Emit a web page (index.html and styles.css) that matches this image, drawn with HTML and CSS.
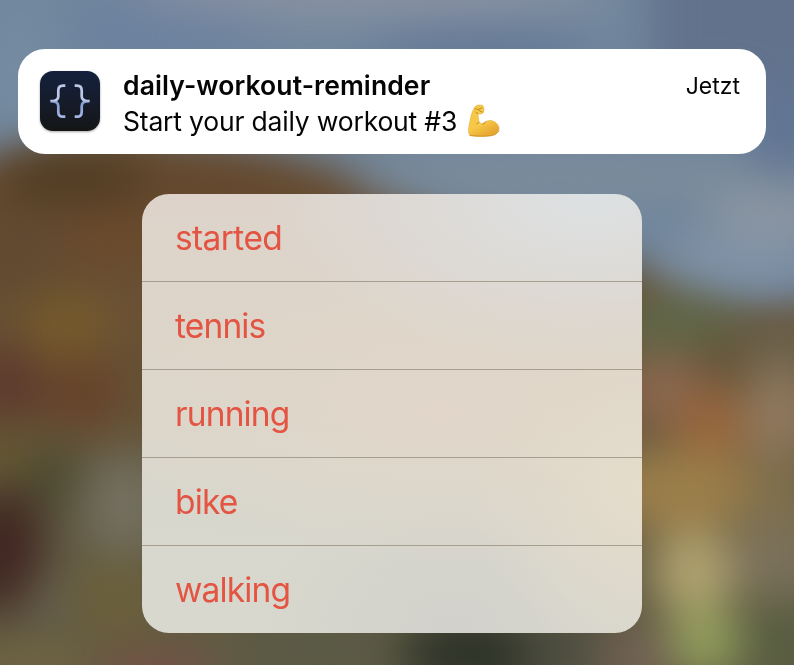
FILE: index.html
```html
<!DOCTYPE html>
<html lang="de">
<head>
<meta charset="utf-8">
<title>daily-workout-reminder</title>
<link rel="stylesheet" href="styles.css">
</head>
<body>
<svg class="wallpaper" viewBox="0 0 794 665" preserveAspectRatio="none" aria-hidden="true">
  <defs>
    <filter id="soft" x="-30%" y="-30%" width="160%" height="160%" color-interpolation-filters="sRGB"><feGaussianBlur stdDeviation="22"/></filter>
    <filter id="edge" x="-30%" y="-30%" width="160%" height="160%" color-interpolation-filters="sRGB"><feGaussianBlur stdDeviation="20"/></filter>
    <linearGradient id="ground" x2="0" y2="1"><stop offset=".3" stop-color="#664b2f"/><stop offset=".6" stop-color="#665337"/><stop offset=".75" stop-color="#625b43"/></linearGradient>
  </defs>
  <rect width="794" height="665" fill="url(#ground)"/>
  <path filter="url(#edge)" fill="#71879d" d="M-80-80H900V305L730 305L640 265L500 235L330 165L130 130L20 140L-80 200Z"/>
  <g filter="url(#soft)">
    <ellipse cx="20" cy="70" rx="35" ry="65" fill="#758ba1"/>
    <ellipse cx="160" cy="30" rx="100" ry="30" fill="#6b819e"/>
    <ellipse cx="370" cy="-8" rx="240" ry="24" fill="#8d92a3"/>
    <ellipse cx="480" cy="52" rx="110" ry="20" fill="#617694"/>
    <rect x="650" y="-60" width="220" height="150" fill="#62728c"/>
    <ellipse cx="785" cy="125" rx="45" ry="50" fill="#617492"/>
    <ellipse cx="560" cy="178" rx="210" ry="23" fill="#7d8c9b"/>
    <ellipse cx="770" cy="215" rx="65" ry="35" fill="#8994a0"/>
    <ellipse cx="735" cy="262" rx="80" ry="24" fill="#8192a8"/>
    <ellipse cx="75" cy="180" rx="75" ry="24" fill="#4e3b23"/>
    <ellipse cx="225" cy="185" rx="70" ry="16" fill="#64482f"/>
    <ellipse cx="110" cy="235" rx="45" ry="30" fill="#6b4a2c"/>
    <ellipse cx="15" cy="250" rx="40" ry="50" fill="#614a32"/>
    <ellipse cx="128" cy="310" rx="35" ry="35" fill="#6b5136"/>
    <ellipse cx="65" cy="325" rx="45" ry="32" fill="#765b2b"/>
    <ellipse cx="5" cy="385" rx="35" ry="40" fill="#5d392e"/>
    <ellipse cx="82" cy="393" rx="42" ry="36" fill="#67432a"/>
    <ellipse cx="5" cy="455" rx="25" ry="23" fill="#685a2c"/>
    <ellipse cx="50" cy="480" rx="30" ry="35" fill="#4d4a31"/>
    <ellipse cx="125" cy="505" rx="42" ry="50" fill="#747060"/>
    <ellipse cx="0" cy="550" rx="45" ry="62" fill="#412722"/>
    <ellipse cx="47" cy="600" rx="20" ry="32" fill="#65604f"/>
    <ellipse cx="115" cy="600" rx="42" ry="38" fill="#6c603a"/>
    <ellipse cx="30" cy="670" rx="60" ry="22" fill="#736741"/>
    <ellipse cx="155" cy="675" rx="60" ry="20" fill="#7b4f48"/>
    <ellipse cx="325" cy="650" rx="95" ry="50" fill="#5b5a45"/>
    <ellipse cx="475" cy="655" rx="75" ry="45" fill="#30352a"/>
    <ellipse cx="560" cy="650" rx="40" ry="35" fill="#4a4c40"/>
    <ellipse cx="670" cy="322" rx="70" ry="26" fill="#5e694a"/>
    <ellipse cx="785" cy="345" rx="50" ry="22" fill="#6b6450"/>
    <ellipse cx="662" cy="390" rx="48" ry="36" fill="#8a6850"/>
    <ellipse cx="780" cy="415" rx="42" ry="50" fill="#8f795e"/>
    <ellipse cx="710" cy="425" rx="35" ry="35" fill="#99653a"/>
    <ellipse cx="680" cy="490" rx="85" ry="42" fill="#9b7e4a"/>
    <ellipse cx="785" cy="500" rx="40" ry="30" fill="#80704b"/>
    <ellipse cx="780" cy="560" rx="50" ry="45" fill="#7b715b"/>
    <ellipse cx="693" cy="572" rx="42" ry="42" fill="#b0a370"/>
    <ellipse cx="775" cy="640" rx="50" ry="42" fill="#585d41"/>
    <ellipse cx="635" cy="660" rx="36" ry="28" fill="#746258"/>
    <ellipse cx="705" cy="642" rx="38" ry="35" fill="#929f5c"/>
  </g>
</svg>
<main class="screen">
  <section class="notification">
    <svg class="app-icon" viewBox="0 0 60 60" aria-hidden="true">
      <defs>
        <linearGradient id="tile" x2="0" y2="1"><stop stop-color="#14203d"/><stop offset=".55" stop-color="#151b29"/><stop offset="1" stop-color="#141516"/></linearGradient>
        <linearGradient id="brace" x1="0" y1="13" x2="0" y2="47" gradientUnits="userSpaceOnUse"><stop stop-color="#bcc8e4"/><stop offset=".48" stop-color="#bdc9ea"/><stop offset=".55" stop-color="#829bd0"/><stop offset="1" stop-color="#a9b9e4"/></linearGradient>
      </defs>
      <rect width="60" height="60" rx="13" fill="url(#tile)"/>
      <g fill="none" stroke="url(#brace)" stroke-width="2.7">
        <path d="M25.3 14.7H23q-4.7 0-4.7 4.7v6q0 4.8-8 4.8q8 0 8 4.8v6q0 4.7 4.7 4.7h2.3"/>
        <path d="M34.7 14.7H37q4.7 0 4.7 4.7v6q0 4.8 8 4.8q-8 0-8 4.8v6q0 4.7-4.7 4.7h-2.3"/>
      </g>
    </svg>
    <div class="content">
      <div class="heading"><h1 class="title">daily-workout-reminder</h1><time class="time">Jetzt</time></div>
      <p class="message"><span>Start your daily workout #3</span>
        <svg class="biceps" viewBox="0 0 34 34" aria-label="💪">
          <defs>
            <linearGradient id="skin" x2=".5" y2="1"><stop stop-color="#f6c944"/><stop offset=".65" stop-color="#f7c847"/><stop offset="1" stop-color="#e6a832"/></linearGradient>
          </defs>
          <path fill="url(#skin)" stroke="#dca83a" stroke-width=".5" d="M7.5 3.5C8.5 1.5 11 .8 13.2 1.2C15 .8 16.5 1.5 16.5 3.2C17.5 5 17.2 8.5 15.3 9.5C14 10.2 12.2 10.1 10.8 9.8C11.5 12.5 11.5 15.5 12 18.2C14.5 20 16 19.7 18.5 17.7C23.5 14.7 29.5 17.5 31.5 22C33.7 27 29.5 31 24.5 31.7C17.5 32.8 8 32.7 3 31.7C1 28.5 1.2 26 2 22C3.3 15.5 4 9 7.5 3.5Z"/>
          <path fill="none" stroke="#b77c22" stroke-width=".8" stroke-linecap="round" stroke-linejoin="round" d="M8.2 4.6q1.4 1.2 3.2.8l3.6-1.5M11.4 5.5q.6 2 3.8 2.5M10.8 9.8q-1.4-.5-2-1.8M12 18.2q-1 1.3-2.3 1.7M16 20.4q1-1.4 2.5-2.5"/>
          <path fill="none" stroke="#d6972b" stroke-width="1" stroke-linecap="round" d="M3 31.4q14 1.4 22 0q4.5-.8 6.4-4"/>
        </svg>
      </p>
    </div>
  </section>
  <ul class="actions">
    <li class="action">started</li>
    <li class="action">tennis</li>
    <li class="action">running</li>
    <li class="action">bike</li>
    <li class="action">walking</li>
  </ul>
</main>
</body>
</html>
```
FILE: styles.css
```css
* { box-sizing: border-box; }
body {
  margin: 0;
  height: 665px;
  overflow: hidden;
  font-family: Inter, "Liberation Sans", sans-serif;
  color: #050505;
}
.wallpaper {
  position: fixed;
  inset: 0;
  width: 100%;
  height: 100%;
  z-index: -1;
}
.screen { padding: 49px 28px 0 18px; }
.notification {
  display: flex;
  height: 105px;
  padding: 22px 26px 0 22px;
  border-radius: 27px;
  background: #fff;
}
.app-icon {
  width: 60px;
  height: 60px;
  flex: none;
  filter: drop-shadow(0 1px 1px rgba(0, 0, 0, .35));
}
.content { flex: 1; margin-left: 23px; }
.heading { display: flex; justify-content: space-between; height: 32px; }
.title {
  margin: 0;
  font-size: 26.5px;
  font-weight: 600;
  line-height: 28px;
  letter-spacing: .1px;
}
.time { font-size: 23px; line-height: 31px; }
.message {
  display: flex;
  margin: 0;
  font-size: 26.5px;
  line-height: 36px;
  letter-spacing: -.19px;
}
.biceps { width: 34px; height: 34px; margin: 1px 0 0 10px; flex: none; }
.actions {
  list-style: none;
  width: 500px;
  height: 439px;
  margin: 40px 0 0 124px;
  padding: 0;
  border-radius: 27px;
  overflow: hidden;
  background:
    radial-gradient(ellipse 330px 170px at 90% 0%, #dde1e3 0%, rgba(221, 225, 227, 0) 100%),
    radial-gradient(ellipse 170px 170px at 100% 68%, #e5dccb 0%, rgba(229, 220, 203, 0) 100%),
    radial-gradient(ellipse 380px 150px at 60% 50%, #e1d6c9 0%, rgba(225, 214, 201, 0) 100%),
    radial-gradient(ellipse 200px 140px at 62% 100%, #d2d1cb 0%, rgba(210, 209, 203, 0) 100%),
    linear-gradient(#ddd3ca 0%, #ddd5c9 35%, #d7d7cd 70%, #d9d8ce 100%);
}
.action {
  height: 88px;
  padding-left: 33px;
  border-bottom: 1px solid #a69e8f;
  color: #e35443;
  font-size: 33.5px;
  line-height: 89px;
  letter-spacing: -.85px;
}
.action:first-child { letter-spacing: -.6px; }
.action:last-child { border-bottom: 0; }
```
